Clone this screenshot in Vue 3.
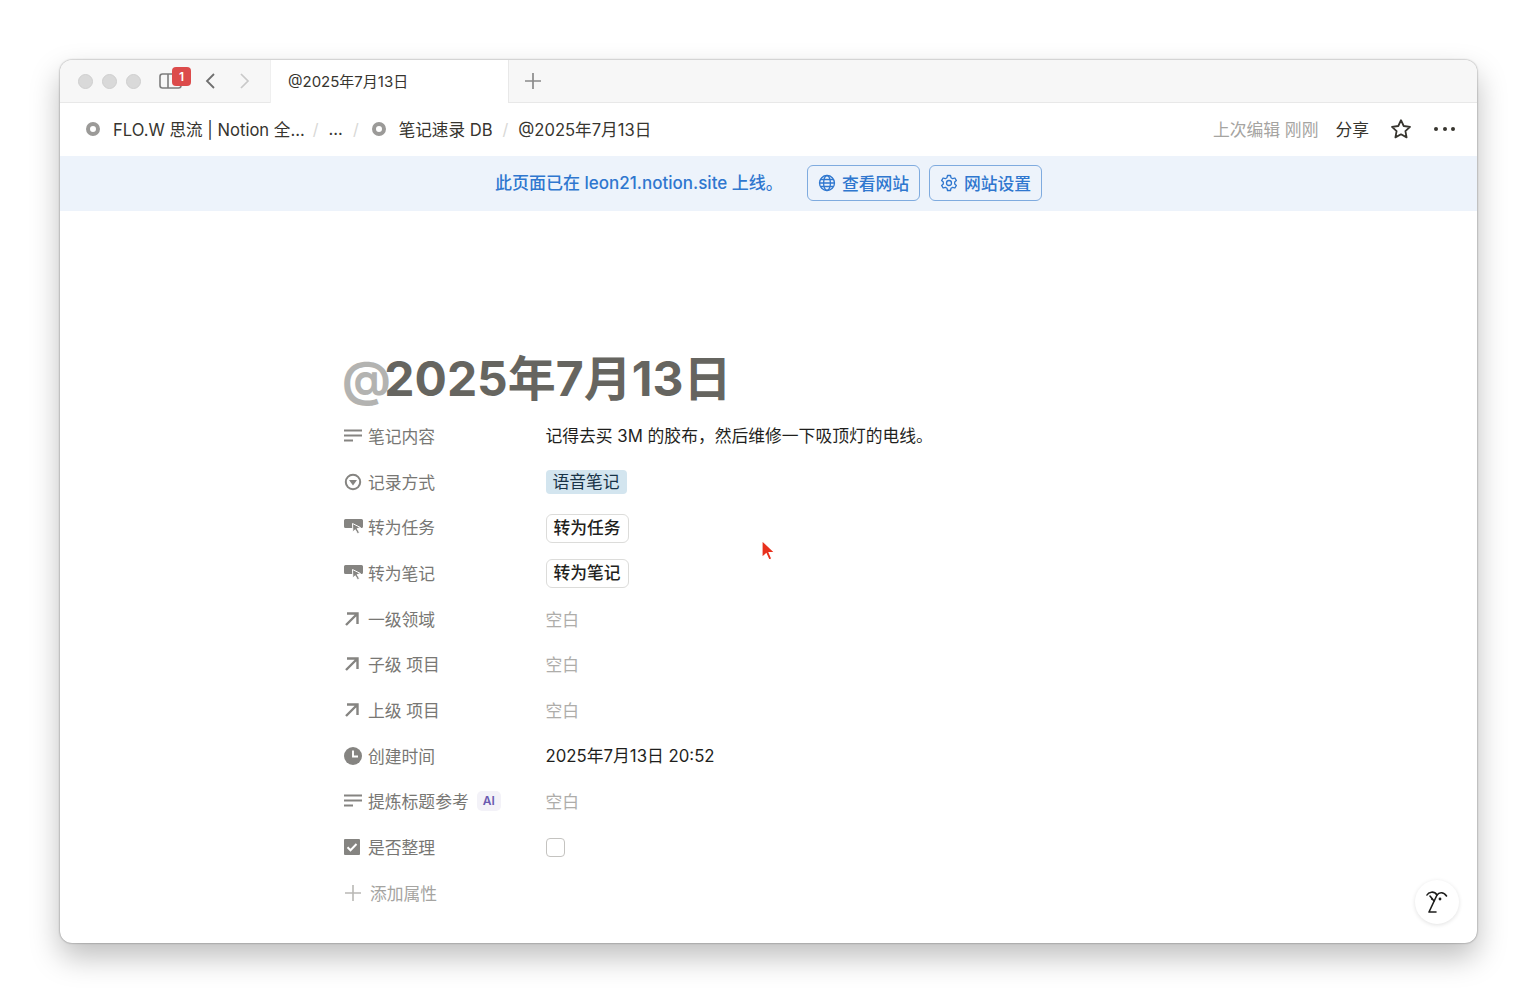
<script setup>
const rows = [
  { icon: 'text', label: '笔记内容', kind: 'text', value: '记得去买 3M 的胶布，然后维修一下吸顶灯的电线。' },
  { icon: 'select', label: '记录方式', kind: 'tag', value: '语音笔记' },
  { icon: 'button', label: '转为任务', kind: 'btn', value: '转为任务' },
  { icon: 'button', label: '转为笔记', kind: 'btn', value: '转为笔记' },
  { icon: 'arrow', label: '一级领域', kind: 'empty', value: '空白' },
  { icon: 'arrow', label: '子级 项目', kind: 'empty', value: '空白' },
  { icon: 'arrow', label: '上级 项目', kind: 'empty', value: '空白' },
  { icon: 'clock', label: '创建时间', kind: 'text', value: '2025年7月13日 20:52' },
  { icon: 'text', label: '提炼标题参考', kind: 'empty', value: '空白', ai: true },
  { icon: 'check', label: '是否整理', kind: 'box' }
]
</script>

<template>
  <div class="page">
    <div class="window">
      <div class="tabbar">
        <div class="lights"><i></i><i></i><i></i></div>
        <div class="sidebar-btn">
          <svg width="24" height="18" viewBox="0 0 24 18" fill="none" stroke="#7d7d7d" stroke-width="1.6"><rect x="1" y="2" width="21" height="14" rx="2.5"/><path d="M9 2v14"/></svg>
          <span class="badge">1</span>
        </div>
        <svg class="nav-back" width="12" height="18" viewBox="0 0 12 18" fill="none" stroke="#6f6f6f" stroke-width="1.8"><path d="M10 2 3 9l7 7"/></svg>
        <svg class="nav-fwd" width="12" height="18" viewBox="0 0 12 18" fill="none" stroke="#c9c9c9" stroke-width="1.7"><path d="M2 2l7 7-7 7"/></svg>
        <div class="tab">@2025年7月13日</div>
        <svg class="plus" width="18" height="18" viewBox="0 0 18 18" stroke="#8a8a8a" stroke-width="1.7"><path d="M9 1v16M1 9h16"/></svg>
      </div>

      <div class="crumbs">
        <span class="ring"></span>
        <span class="crumb first">FLO.W 思流 | Notion 全...</span>
        <span class="sep">/</span>
        <span class="crumb">...</span>
        <span class="sep">/</span>
        <span class="ring second"></span>
        <span class="crumb">笔记速录 DB</span>
        <span class="sep">/</span>
        <span class="crumb">@2025年7月13日</span>
        <span class="edited">上次编辑 刚刚</span>
        <span class="share">分享</span>
        <svg class="star" width="22" height="22" viewBox="0 0 22 22" fill="none" stroke="#37352f" stroke-width="1.8" stroke-linejoin="round"><path d="M11 2.2l2.7 5.8 6.3.8-4.6 4.3 1.2 6.3-5.600-3.100-5.600 3.100 1.200-6.300L2 8.800l6.300-.8z"/></svg>
        <span class="dots"><i></i><i></i><i></i></span>
      </div>

      <div class="banner">
        <span class="banner-text">此页面已在 leon21.notion.site 上线。</span>
        <span class="banner-btn">
          <svg width="18" height="18" viewBox="0 0 18 18" fill="none" stroke="#2f77cf" stroke-width="1.3"><circle cx="9" cy="9" r="7.500"/><ellipse cx="9" cy="9" rx="3.400" ry="7.500"/><path d="M1.500 9h15M2.500 5.500h13M2.500 12.500h13"/></svg>
          <span>查看网站</span>
        </span>
        <span class="banner-btn">
          <svg width="18" height="18" viewBox="0 0 18 18" fill="none" stroke="#2f77cf" stroke-width="1.3" stroke-linejoin="round"><path d="M7.500 1.500h3l.5 2.200 1.700 1 2.200-.7 1.500 2.600-1.700 1.500v1.800l1.700 1.500-1.500 2.600-2.200-.7-1.700 1-.5 2.200h-3l-.5-2.200-1.700-1-2.200.7-1.500-2.600 1.700-1.500V8.100L1.600 6.600l1.500-2.600 2.200.7 1.700-1z"/><circle cx="9" cy="9" r="2.500"/></svg>
          <span>网站设置</span>
        </span>
      </div>

      <div class="content">
        <h1 class="title"><span class="at">@</span>2025年7月13日</h1>
        <div v-for="row in rows" :key="row.label" class="row">
          <div class="label">
            <span class="icon">
              <svg v-if="row.icon === 'text'" width="18" height="14" viewBox="0 0 18 14" fill="#858481"><rect y="0.500" width="18" height="2"/><rect y="5.500" width="18" height="2"/><rect y="10.500" width="9" height="2"/></svg>
              <svg v-else-if="row.icon === 'select'" width="18" height="18" viewBox="0 0 18 18"><circle cx="9" cy="9" r="7.200" fill="none" stroke="#858481" stroke-width="2"/><path d="M5 7h8L9 12.500z" fill="#858481"/></svg>
              <svg v-else-if="row.icon === 'button'" width="20" height="18" viewBox="0 0 20 18"><path d="M1.500 1h16a1.500 1.500 0 0 1 1.500 1.500v6a1.500 1.500 0 0 1-1.500 1.500h-16A1.500 1.500 0 0 1 0 8.500v-6A1.500 1.500 0 0 1 1.500 1z" fill="#858481"/><path d="M8.500 5.500l8 4-3.300 1.100 2.300 4-2 1.100-2.300-4-2.300 2.400z" fill="#858481" stroke="#fff" stroke-width="1"/></svg>
              <svg v-else-if="row.icon === 'arrow'" width="16" height="16" viewBox="0 0 16 16" fill="none" stroke="#858481" stroke-width="2.400"><path d="M3 2.500h10.500V13M13.500 2.500 2 14"/></svg>
              <svg v-else-if="row.icon === 'clock'" width="18" height="18" viewBox="0 0 18 18"><circle cx="9" cy="9" r="9" fill="#858481"/><path d="M9 3.500V9.500h5" fill="none" stroke="#fff" stroke-width="1.900"/></svg>
              <svg v-else width="16" height="16" viewBox="0 0 16 16"><rect width="16" height="16" rx="1" fill="#858481"/><path d="M3.500 8.200l3 3 6-6.200" fill="none" stroke="#fff" stroke-width="2"/></svg>
            </span>
            <span>{{ row.label }}</span>
            <span v-if="row.ai" class="ai">AI</span>
          </div>
          <div class="value">
            <span v-if="row.kind === 'text'" class="val-text">{{ row.value }}</span>
            <span v-else-if="row.kind === 'tag'" class="tag">{{ row.value }}</span>
            <span v-else-if="row.kind === 'btn'" class="action">{{ row.value }}</span>
            <span v-else-if="row.kind === 'empty'" class="empty">{{ row.value }}</span>
            <span v-else class="checkbox"></span>
          </div>
        </div>
        <div class="row add">
          <svg class="add-icon" width="16" height="16" viewBox="0 0 16 16" stroke="#b9b8b5" stroke-width="1.600"><path d="M8 0v16M0 8h16"/></svg>
          <span>添加属性</span>
        </div>
      </div>

      <div class="face">
        <svg width="24" height="26" viewBox="0 0 24 26" fill="none" stroke="#1d1d1b" stroke-width="1.600" stroke-linecap="round" stroke-linejoin="round"><path d="M2 6C3.500 3 9 1.500 12 6L4 23h7"/><path d="M12 6c2-3 6.500-3.500 9.500 1"/><path d="M5 7l4 5"/><circle cx="7" cy="10" r="1" fill="#1d1d1b" stroke="none"/><circle cx="15" cy="10" r="1.400" fill="#1d1d1b" stroke="none"/></svg>
      </div>

      <svg class="cursor" width="16" height="24" viewBox="0 0 16 24"><path d="M2 1.500v17l4.200-3.800 2.800 6.300 2.800-1.200-2.700-6.200 5.400-.3z" fill="#e8301c" stroke="#fff" stroke-width="1.200"/></svg>
    </div>
  </div>
</template>

<style scoped>
.page {
  width: 1537px;
  height: 1003px;
  padding: 60px 60px 0;
  box-sizing: border-box;
  background: #fff;
  overflow: hidden;
  font-family: Inter, "Noto Sans CJK SC", sans-serif;
}
.window {
  position: relative;
  width: 1417px;
  height: 883px;
  background: #fff;
  border-radius: 12px;
  box-shadow: 0 14px 30px rgba(0, 0, 0, 0.26), 0 0 2px rgba(0, 0, 0, 0.5);
}
.tabbar {
  height: 43px;
  box-sizing: border-box;
  display: flex;
  align-items: center;
  background: #f7f7f7;
  border-bottom: 1px solid #e8e8e8;
  border-radius: 12px 12px 0 0;
  padding-left: 18px;
}
.lights { display: flex; gap: 9px; }
.lights i {
  display: block;
  width: 15px;
  height: 15px;
  border-radius: 50%;
  background: #d9d9d9;
  border: 0.5px solid #cfcfcf;
  box-sizing: border-box;
}
.sidebar-btn {
  position: relative;
  display: flex;
  margin-left: 18px;
  width: 24px;
  height: 18px;
}
.badge {
  position: absolute;
  left: 13px;
  top: -5px;
  width: 19px;
  height: 19px;
  border-radius: 4px;
  background: #dc4b4b;
  color: #fff;
  font-size: 12px;
  font-weight: 600;
  line-height: 19px;
  text-align: center;
}
.nav-back { margin-left: 21px; }
.nav-fwd { margin-left: 23px; }
.tab {
  align-self: stretch;
  margin-left: 19px;
  margin-bottom: -1px;
  width: 239px;
  box-sizing: border-box;
  padding-left: 17px;
  background: #fff;
  border-right: 1px solid #e8e8e8;
  border-left: 1px solid #efefef;
  font-size: 15px;
  line-height: 44px;
  color: #37352f;
}
.plus { margin-left: 15px; }
.crumbs {
  height: 53px;
  box-sizing: border-box;
  display: flex;
  align-items: center;
  padding: 0 22px 2px 26px;
  font-size: 16.600px;
  color: #37352f;
}
.ring {
  width: 14px;
  height: 14px;
  box-sizing: border-box;
  border: 4px solid #9b9a98;
  border-radius: 50%;
  flex: none;
}
.ring.second { margin-left: 3px; margin-right: 13px; }
.crumb.first { margin-left: 13px; margin-right: -2px; }
.sep {
  color: #d8d8d6;
  margin: 0 10px;
  font-size: 16px;
}
.edited {
  margin-left: auto;
  color: #a5a4a1;
  font-size: 16.800px;
}
.share { margin-left: 17px; font-size: 16.800px; }
.star { margin-left: 21px; }
.dots { display: flex; gap: 4.500px; margin-left: 22px; }
.dots i {
  display: block;
  width: 4px;
  height: 4px;
  border-radius: 50%;
  background: #37352f;
}
.banner {
  height: 55px;
  box-sizing: border-box;
  display: flex;
  align-items: center;
  background: #edf3fb;
  padding: 0 0 2px 435px;
  color: #2f77cf;
  font-size: 17px;
  font-weight: 500;
}
.banner-text { width: 312px; padding-bottom: 2px; white-space: nowrap; }
.banner-btn {
  height: 36px;
  width: 113px;
  box-sizing: border-box;
  display: flex;
  align-items: center;
  justify-content: center;
  gap: 6px;
  margin-right: 9px;
  border: 1px solid #7fabdf;
  border-radius: 6px;
  font-size: 16.800px;
}
.content { padding-left: 282px; }
.title {
  margin: 0;
  padding-top: 134px;
  height: 68px;
  line-height: 67px;
  font-size: 48px;
  font-weight: 700;
  color: #666560;
  box-sizing: content-box;
}
.at { color: #b3b3b1; letter-spacing: -6.500px; }
.row {
  height: 45.700px;
  display: flex;
  align-items: center;
  font-size: 16.800px;
  color: #787774;
}
.label {
  width: 203.500px;
  display: flex;
  align-items: center;
  flex: none;
}
.icon {
  width: 26px;
  padding-left: 2px;
  box-sizing: border-box;
  display: flex;
  flex: none;
}
.ai {
  margin-left: 8px;
  width: 24px;
  height: 20px;
  border-radius: 5px;
  background: #f3f2f8;
  color: #6a5bb0;
  font-size: 12px;
  font-weight: 600;
  line-height: 20px;
  text-align: center;
}
.value { display: flex; align-items: center; }
.val-text { color: #1f1f1d; margin-bottom: 2px; }
.tag {
  height: 24px;
  line-height: 24px;
  padding: 0 7px;
  background: #d3e5ef;
  border-radius: 4px;
  color: #183347;
}
.action {
  margin-top: 2px;
  height: 27px;
  line-height: 27px;
  padding: 0 7px;
  border: 1px solid #dcdcda;
  border-radius: 6px;
  color: #1f1f1d;
  font-weight: 500;
}
.empty { color: #aeadaa; }
.checkbox {
  width: 19px;
  height: 19px;
  box-sizing: border-box;
  border: 1.500px solid #c4c3c0;
  border-radius: 4px;
}
.add { color: #a5a4a1; }
.add-icon { margin: 0 9px 0 3px; }
.face {
  position: absolute;
  right: 18px;
  bottom: 19px;
  width: 44px;
  height: 44px;
  border-radius: 50%;
  background: #fff;
  box-shadow: 0 1px 4px rgba(0, 0, 0, 0.12);
  display: flex;
  align-items: center;
  justify-content: center;
}
.cursor {
  position: absolute;
  left: 700px;
  top: 479px;
}
</style>
